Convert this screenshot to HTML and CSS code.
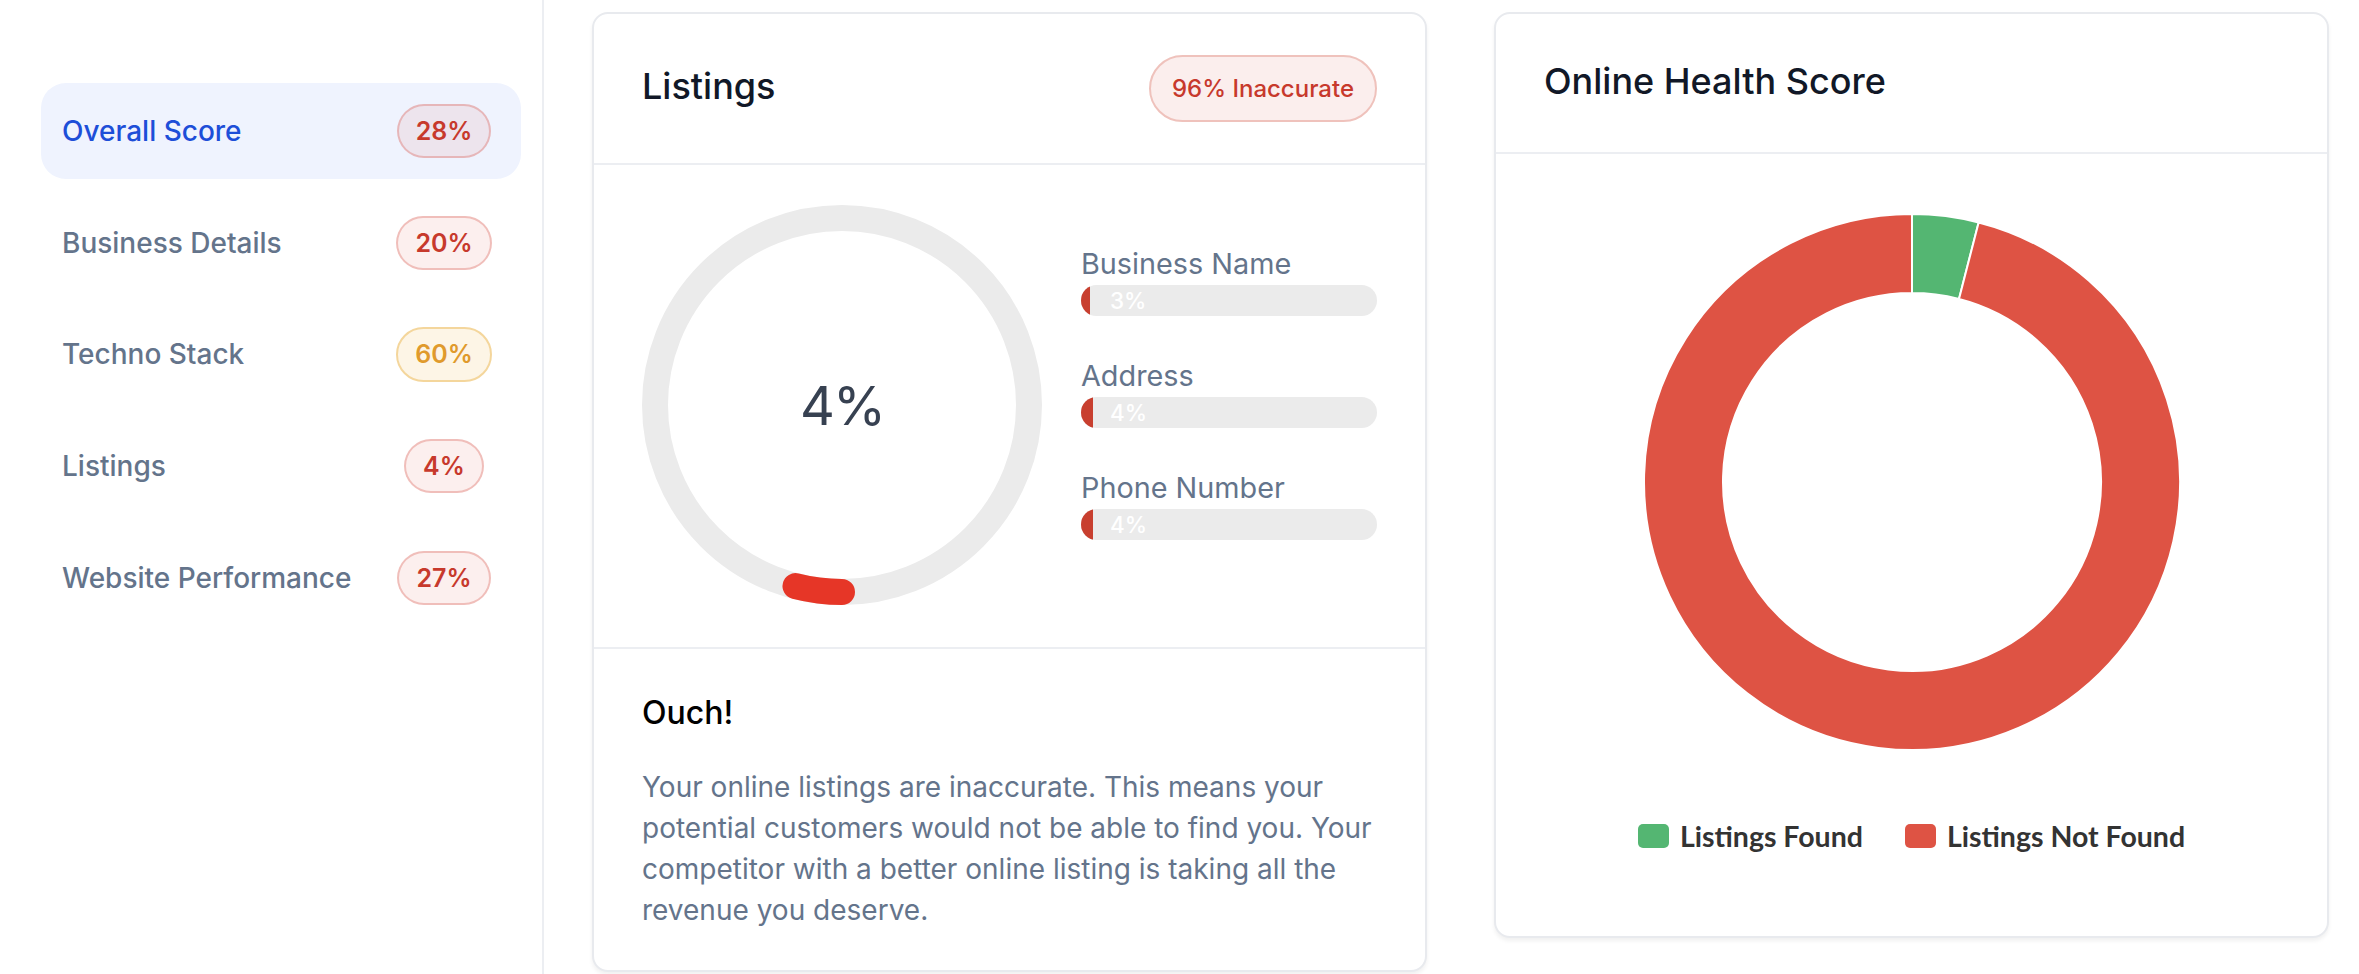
FILE: index.html
```html
<!DOCTYPE html>
<html lang="en">
<head>
<meta charset="utf-8">
<title>Listings Report</title>
<link rel="stylesheet" href="styles.css">
</head>
<body>
<div class="page">
  <aside class="sidebar">
    <nav class="nav">
      <div class="nav-item active">
        <span class="nav-label">Overall Score</span>
        <span class="badge-wrap"><span class="badge badge-red">28%</span></span>
      </div>
      <div class="nav-item">
        <span class="nav-label">Business Details</span>
        <span class="badge-wrap"><span class="badge badge-red">20%</span></span>
      </div>
      <div class="nav-item">
        <span class="nav-label">Techno Stack</span>
        <span class="badge-wrap"><span class="badge badge-amber">60%</span></span>
      </div>
      <div class="nav-item">
        <span class="nav-label">Listings</span>
        <span class="badge-wrap"><span class="badge badge-red">4%</span></span>
      </div>
      <div class="nav-item">
        <span class="nav-label">Website Performance</span>
        <span class="badge-wrap"><span class="badge badge-red">27%</span></span>
      </div>
    </nav>
  </aside>

  <main class="main">
    <section class="card">
      <header class="card-head card-head-listings">
        <h2 class="card-title">Listings</h2>
        <span class="pill">96% Inaccurate</span>
      </header>
      <div class="listings-body">
        <div class="ring">
          <svg class="ring-svg" width="400" height="400" viewBox="0 0 400 400">
            <circle cx="200" cy="200" r="187" fill="none" stroke="#ebebeb" stroke-width="26"/>
            <circle cx="200" cy="200" r="187" fill="none" stroke="#e63627" stroke-width="26" stroke-linecap="round" stroke-dasharray="47 1200" transform="rotate(90 200 200)"/>
          </svg>
          <span class="ring-value">4%</span>
        </div>
        <div class="bars">
          <div class="bar-group">
            <div class="bar-label">Business Name</div>
            <div class="bar">
              <div class="bar-fill" style="width:3%"></div>
              <span class="bar-text">3%</span>
            </div>
          </div>
          <div class="bar-group">
            <div class="bar-label">Address</div>
            <div class="bar">
              <div class="bar-fill" style="width:4%"></div>
              <span class="bar-text">4%</span>
            </div>
          </div>
          <div class="bar-group">
            <div class="bar-label">Phone Number</div>
            <div class="bar">
              <div class="bar-fill" style="width:4%"></div>
              <span class="bar-text">4%</span>
            </div>
          </div>
        </div>
      </div>
      <div class="note">
        <h3 class="note-title">Ouch!</h3>
        <p class="note-text">Your online listings are inaccurate. This means your potential customers would not be able to find you. Your competitor with a better online listing is taking all the revenue you deserve.</p>
      </div>
    </section>

    <section class="card">
      <header class="card-head card-head-health">
        <h2 class="card-title">Online Health Score</h2>
      </header>
      <div class="health-body">
        <svg class="donut" width="538" height="538" viewBox="0 0 538 538">
          <path d="M 269 1 A 268 268 0 0 1 335.65 9.42 L 316.0 85.94 A 189 189 0 0 0 269 80 Z" fill="#54b672" stroke="#ffffff" stroke-width="2" stroke-linejoin="round"/>
          <path d="M 335.65 9.42 A 268 268 0 1 1 269 1 L 269 80 A 189 189 0 1 0 316.0 85.94 Z" fill="#de5344" stroke="#ffffff" stroke-width="2" stroke-linejoin="round"/>
        </svg>
        <div class="legend">
          <div class="legend-item"><span class="swatch swatch-green"></span><span>Listings Found</span></div>
          <div class="legend-item"><span class="swatch swatch-red"></span><span>Listings Not Found</span></div>
        </div>
      </div>
    </section>
  </main>
</div>
</body>
</html>
```

FILE: styles.css
```css
html, body {
  margin: 0;
  padding: 0;
  background: #ffffff;
}

body {
  font-family: Inter, "Noto Sans", "Liberation Sans", sans-serif;
  color: #111827;
}

.page {
  display: flex;
  min-height: 974px;
}

/* Sidebar */
.sidebar {
  width: 544px;
  flex-shrink: 0;
  box-sizing: border-box;
  border-right: 2px solid #eceef2;
  padding: 83px 21px 0 41px;
}

.nav {
  display: flex;
  flex-direction: column;
  gap: 15.7px;
}

.nav-item {
  height: 96px;
  display: flex;
  align-items: center;
  justify-content: space-between;
  padding: 0 27px 0 21px;
  border-radius: 25px;
  font-size: 28px;
  font-weight: 500;
  color: #64748b;
}

.nav-item.active {
  background: #eff3fe;
  color: #1d4ed8;
}

.badge-wrap {
  width: 100px;
  display: flex;
  justify-content: center;
}

.badge {
  font-size: 25px;
  font-weight: 600;
  line-height: 36px;
  padding: 7.2px 17px;
  border: 2px solid;
  border-radius: 999px;
}

.badge-red {
  color: #c7392c;
  background: rgba(222, 83, 68, 0.09);
  border-color: rgba(214, 88, 76, 0.32);
}

.badge-amber {
  color: #e09a2c;
  background: #fdf5e6;
  border-color: #f4d69c;
}

/* Main */
.main {
  flex: 1;
  display: grid;
  grid-template-columns: 1fr 1fr;
  column-gap: 67px;
  align-items: start;
  padding: 12px 30px 0 48px;
}

.card {
  background: #ffffff;
  border: 2px solid #e8eaee;
  border-radius: 16px;
  box-shadow: 0 3px 4px rgba(0, 0, 0, 0.06);
}

.card-head {
  display: flex;
  align-items: center;
  justify-content: space-between;
  border-bottom: 2px solid #eceef2;
  padding: 0 48px;
}

.card-head-listings {
  padding-top: 41px;
  padding-bottom: 41px;
}

.card-head-health {
  padding-top: 42px;
  padding-bottom: 40px;
}

.card-title {
  margin: 0;
  padding-bottom: 6px;
  font-size: 36px;
  line-height: 50px;
  font-weight: 500;
  color: #111827;
}

.pill {
  font-size: 24px;
  font-weight: 500;
  line-height: 36px;
  padding: 13.6px 21px;
  border: 2px solid #efc2bc;
  background: #fbeeed;
  color: #c7392c;
  border-radius: 999px;
}

/* Listings body */
.listings-body {
  display: flex;
  gap: 39px;
  padding: 40px 48px 42px;
  border-bottom: 2px solid #eceef2;
}

.ring {
  width: 400px;
  height: 400px;
  flex-shrink: 0;
  display: grid;
  place-items: center;
}

.ring > * {
  grid-area: 1 / 1;
}

.ring-svg {
  display: block;
}

.ring-value {
  font-size: 54px;
  font-weight: 400;
  letter-spacing: -2px;
  color: #374151;
}

.bars {
  flex: 1;
  align-self: center;
  display: flex;
  flex-direction: column;
  gap: 39px;
  padding-bottom: 27px;
}

.bar-label {
  font-size: 28.8px;
  line-height: 42px;
  color: #64748b;
}

.bar {
  height: 31px;
  border-radius: 999px;
  background: #ebebeb;
  overflow: hidden;
  display: grid;
}

.bar > * {
  grid-area: 1 / 1;
}

.bar-fill {
  height: 100%;
  background: #c83f2f;
}

.bar-text {
  padding-left: 29px;
  color: #ffffff;
  font-size: 22.5px;
  font-weight: 500;
  line-height: 31px;
}

/* Note */
.note {
  padding: 40px 36px 39px 48px;
}

.note-title {
  margin: 0 0 30px;
  font-size: 32px;
  line-height: 48px;
  font-weight: 500;
  color: #000000;
}

.note-text {
  margin: 0;
  font-size: 28px;
  line-height: 41px;
  color: #64748b;
}

/* Health card */
.health-body {
  padding: 59px 48px 82px;
  display: flex;
  flex-direction: column;
  align-items: center;
}

.donut {
  display: block;
}

.legend {
  margin-top: 67px;
  display: flex;
  justify-content: center;
  gap: 42px;
  font-family: Lato, "Open Sans", sans-serif;
  font-weight: 700;
  font-size: 28.5px;
  line-height: 36px;
  color: #333333;
}

.legend-item {
  display: flex;
  align-items: center;
  gap: 11px;
}

.swatch {
  width: 31px;
  height: 24px;
  border-radius: 5px;
}

.swatch-green {
  background: #54b672;
}

.swatch-red {
  background: #de5344;
}
```
